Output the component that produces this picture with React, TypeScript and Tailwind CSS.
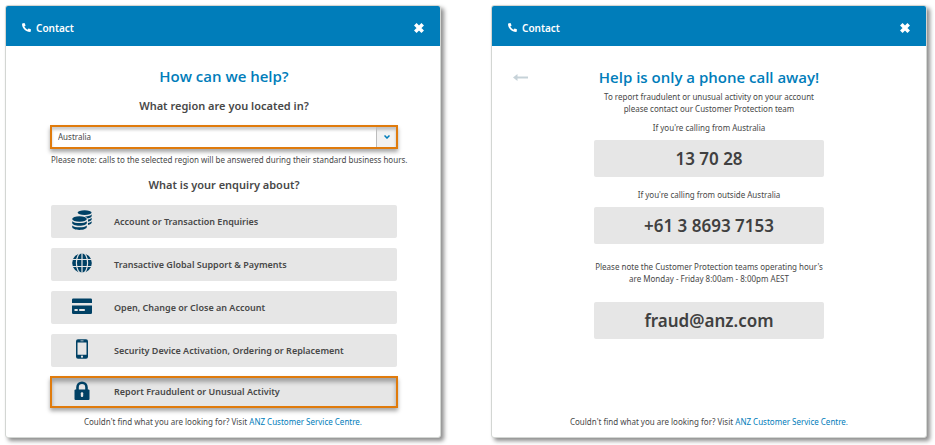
import { useState, type ReactNode } from 'react';
import { FaPhoneAlt } from 'react-icons/fa';

function CoinsIcon() {
  return (
    <svg viewBox="0 0 20 20" className="w-5 h-5" fill="currentColor">
      <ellipse cx="12.6" cy="2.6" rx="7" ry="2.4" />
      <path d="M13 6.4c3.4-.1 6-.9 6.7-2.2v1.6c0 1.4-1.7 2.3-4 2.7-.5-.9-1.5-1.6-2.7-2.1z" />
      <path d="M16 9.6c1.9-.4 3.2-1 3.7-1.8v1.5c0 1.2-1.5 2.100-3.7 2.500z" />
      <path d="M16 13c1.9-.4 3.2-1 3.7-1.8v1.4c0 1.2-1.500 2.100-3.700 2.500z" />
      <ellipse cx="7.5" cy="9" rx="7.3" ry="2.8" />
      <path d="M.2 11.2c1.200 1.300 4 1.900 7.300 1.900s6.100-.6 7.300-1.900v1.800c0 1.600-3.200 2.700-7.300 2.700S.2 14.600.2 13z" />
      <path d="M.2 15.400c1.200 1.200 4 1.900 7.300 1.900s6.100-.7 7.300-1.900v1.600c0 1.600-3.200 2.900-7.300 2.900s-7.300-1.300-7.300-2.900z" />
    </svg>
  );
}

function GlobeIcon() {
  return (
    <svg viewBox="0 0 20 20" className="w-5 h-5">
      <circle cx="10" cy="10" r="9.8" fill="currentColor" />
      <g fill="none" stroke="#e6e6e6" strokeWidth="1.2">
        <path d="M10 0v20M0 6.500h20M0 13.500h20" />
        <ellipse cx="10" cy="10" rx="5.600" ry="10.500" />
      </g>
    </svg>
  );
}

function CardIcon() {
  return (
    <svg viewBox="0 0 20 20" className="w-5 h-5">
      <path d="M1.300 2.500h17.400A1.300 1.300 0 0 1 20 3.800V7H0V3.800A1.300 1.300 0 0 1 1.300 2.500zM0 9.500h20v7.200a1.300 1.300 0 0 1-1.300 1.300H1.300A1.300 1.300 0 0 1 0 16.700z" fill="currentColor" />
      <path d="M2.500 13h3.200v2H2.500zM7.200 13h5.600v2H7.200z" fill="#e6e6e6" />
    </svg>
  );
}

function MobileIcon() {
  return (
    <svg viewBox="0 0 20 20" className="w-5 h-5">
      <rect x="4" y="0.3" width="12" height="19.4" rx="2" fill="currentColor" />
      <path d="M5.500 3.500h9v12.300h-9zM8.500 1.500h3v.8h-3z" fill="#e6e6e6" />
      <circle cx="10" cy="17.700" r="1.100" fill="#e6e6e6" />
    </svg>
  );
}

function LockIcon() {
  return (
    <svg viewBox="0 0 20 20" className="w-5 h-5">
      <path d="M5.500 9V6.200a4.500 4.500 0 0 1 9 0V9" fill="none" stroke="currentColor" strokeWidth="2.600" />
      <rect x="2.500" y="8.500" width="15" height="10.500" rx="1" fill="currentColor" />
      <rect x="8.800" y="11.300" width="2.400" height="4.700" rx="1" fill="#e6e6e6" />
    </svg>
  );
}

const ENQUIRIES = [
  { label: 'Account or Transaction Enquiries', Icon: CoinsIcon },
  { label: 'Transactive Global Support & Payments', Icon: GlobeIcon },
  { label: 'Open, Change or Close an Account', Icon: CardIcon },
  { label: 'Security Device Activation, Ordering or Replacement', Icon: MobileIcon },
  { label: 'Report Fraudulent or Unusual Activity', Icon: LockIcon, highlighted: true },
];

function ContactCard({ children }: { children: ReactNode }) {
  return (
    <section className="flex-1 min-w-0 flex flex-col bg-white border border-[#d3d6d3] rounded-[3px] shadow-[3px_3px_4px_rgba(0,0,0,0.45)]">
      <header className="h-10 shrink-0 flex items-center justify-between px-4 pt-[3px] bg-[#007dba] text-white rounded-t-[2px]">
        <div className="flex items-center gap-[5px]">
          <FaPhoneAlt className="w-[9px] h-[9px]" />
          <span className="text-[10px] leading-4 font-semibold">Contact</span>
        </div>
        <button type="button" aria-label="Close">
          <svg viewBox="0 0 10 10" className="w-[10px] h-[10px]" stroke="currentColor" strokeWidth="3.6">
            <path d="M1.300 1.300l7.400 7.400M8.700 1.300L1.300 8.700" />
          </svg>
        </button>
      </header>
      {children}
      <p className="mt-auto pt-2 pb-[9px] text-center text-[8px] leading-3">
        Couldn't find what you are looking for? Visit{' '}
        <a href="#" className="text-[#007dba]">ANZ Customer Service Centre.</a>
      </p>
    </section>
  );
}

function EnquiryPanel() {
  const [region, setRegion] = useState('Australia');

  return (
    <div className="pt-5 pl-[45px] pr-[43px] text-center">
      <h1 className="font-['Open_Sans',sans-serif] text-[15px] leading-5 font-semibold text-[#007dba]">How can we help?</h1>
      <label htmlFor="region" className="block mt-3 text-[11px] leading-4 font-semibold">
        What region are you located in?
      </label>
      <div className="relative mt-[11px] -mx-px h-6 border-2 border-[#e07b0c] shadow-[inset_0_3px_3px_rgba(0,0,0,0.2),0_3px_4px_rgba(0,0,0,0.35)]">
        <select
          id="region"
          value={region}
          onChange={(e) => setRegion(e.target.value)}
          className="block appearance-none w-full h-full pl-[6px] pr-6 bg-transparent text-[8px] leading-3 outline-none"
        >
          <option>Australia</option>
          <option>New Zealand</option>
          <option>Asia</option>
        </select>
        <span className="absolute inset-y-0 right-0 w-5 flex items-center justify-center border-l border-[#bcbcbc] bg-black/5 pointer-events-none">
          <svg viewBox="0 0 6 4" className="w-[6px] h-1 text-[#007dba]" fill="none" stroke="currentColor" strokeWidth="1.5">
            <path d="M.5.500L3 3 5.500.500" />
          </svg>
        </span>
      </div>
      <p className="mt-[5px] text-[8px] leading-3 whitespace-nowrap">
        Please note: calls to the selected region will be answered during their standard business hours.
      </p>
      <h2 className="mt-[11px] text-[11px] leading-4 font-semibold">What is your enquiry about?</h2>
      <div className="mt-3 flex flex-col gap-[10px]">
        {ENQUIRIES.map(({ label, Icon, highlighted }) => (
          <button
            key={label}
            type="button"
            className={`flex items-center gap-[22px] bg-[#e6e6e6] text-[9px] leading-4 font-semibold ${
              highlighted
                ? '-mx-px -mt-px h-8 pl-5 border-2 border-[#e07b0c] shadow-[inset_0_4px_4px_rgba(0,0,0,0.3),0_3px_4px_rgba(0,0,0,0.35)]'
                : 'h-[33px] pl-[21px] rounded-[2px]'
            }`}
          >
            <span className="mb-[3px] text-[#004165]"><Icon /></span>
            {label}
          </button>
        ))}
      </div>
    </div>
  );
}

function HelpPanel() {
  const box = 'flex items-center justify-center w-[230px] h-[37px] rounded-[2px] bg-[#e6e6e6] text-[17px] leading-6 font-semibold text-[#404040]';

  return (
    <div className="pt-[21px] px-[21px] flex flex-col items-center text-center text-[8px] leading-3">
      <div className="self-stretch grid grid-cols-[1fr_auto_1fr] items-center">
        <button type="button" aria-label="Back" className="justify-self-start text-[#c6d2d8]">
          <svg viewBox="0 0 15 7" className="w-[15px] h-[7px]">
            <path d="M3 3.500h12" stroke="currentColor" strokeWidth="2" />
            <path d="M0 3.500L4.500 0v7z" fill="currentColor" />
          </svg>
        </button>
        <h1 className="font-['Open_Sans',sans-serif] text-[15px] leading-5 font-semibold text-[#007dba]">Help is only a phone call away!</h1>
      </div>
      <p className="mt-1">
        To report fraudulent or unusual activity on your account
        <br />
        please contact our Customer Protection team
      </p>
      <p className="mt-[7px]">If you're calling from Australia</p>
      <a href="tel:137028" className={`mt-[6px] ${box}`}>13 70 28</a>
      <p className="mt-3">If you're calling from outside Australia</p>
      <a href="tel:+61386937153" className={`mt-[6px] ${box}`}>+61 3 8693 7153</a>
      <p className="mt-[17px]">
        Please note the Customer Protection teams operating hour's
        <br />
        are Monday - Friday 8:00am - 8:00pm AEST
      </p>
      <a href="mailto:fraud@anz.com" className={`mt-[17px] ${box}`}>fraud@anz.com</a>
    </div>
  );
}

export default function App() {
  return (
    <main className="flex gap-[50px] pt-[5px] pl-[5px] pr-2 pb-[7px] bg-white font-['Noto_Sans',sans-serif] text-[#484848]">
      <ContactCard>
        <EnquiryPanel />
      </ContactCard>
      <ContactCard>
        <HelpPanel />
      </ContactCard>
    </main>
  );
}
